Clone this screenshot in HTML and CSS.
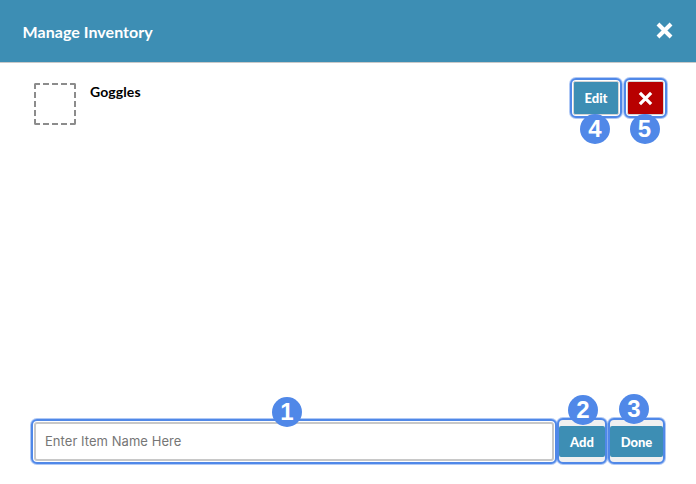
FILE: index.html
```html
<!DOCTYPE html>
<html lang="en">
<head>
<meta charset="utf-8">
<title>Manage Inventory</title>
<link rel="stylesheet" href="styles.css">
</head>
<body>
<div class="modal">
  <header class="head">
    <h1 class="title">Manage Inventory</h1>
    <svg class="close" viewBox="0 0 16 16" aria-label="Close"><path d="M2.5 2.5 13.5 13.5M13.5 2.5 2.5 13.5"/></svg>
  </header>
  <main class="list">
    <div class="row">
      <div class="thumb"></div>
      <div class="name">Goggles</div>
      <div class="actions">
        <div class="mark mark-edit">
          <button class="btn btn-edit">Edit</button>
          <span class="badge">4</span>
        </div>
        <div class="mark mark-del">
          <button class="btn-del" aria-label="Delete"><svg viewBox="0 0 12 12"><path d="M1.5 1.5 10.5 10.5M10.5 1.5 1.5 10.5"/></svg></button>
          <span class="badge">5</span>
        </div>
      </div>
    </div>
  </main>
  <footer class="foot">
    <div class="mark mark-input">
      <input class="field" type="text" placeholder="Enter Item Name Here">
      <span class="badge badge-1">1</span>
    </div>
    <div class="mark mark-add">
      <button class="btn btn-tall">Add</button>
      <span class="badge badge-2">2</span>
    </div>
    <div class="mark mark-done">
      <button class="btn btn-tall">Done</button>
      <span class="badge badge-3">3</span>
    </div>
  </footer>
</div>
</body>
</html>
```
FILE: styles.css
```css
* { box-sizing: border-box; }
html, body { margin: 0; height: 100%; background: #fff; }
body { font-family: Lato, "Liberation Sans", sans-serif; overflow: hidden; }
.modal { width: 696px; height: 484px; display: flex; flex-direction: column; }
.head {
  height: 63px; flex: none; background: #3d8eb4; border-bottom: 1px solid #c9c9c9;
  display: flex; align-items: center; justify-content: space-between; padding: 0 22px 0 22.5px;
}
.title { margin: 0; font-size: 16px; font-weight: 700; letter-spacing: .05px; color: #fff; }
.close { width: 19px; height: 19px; margin-top: -1px; fill: none; stroke: #fff; stroke-width: 3.4; }
.list { flex: 1; padding: 15px 29px 0 34px; }
.row { display: flex; align-items: flex-start; }
.thumb { width: 42px; height: 42px; margin-top: 5px; border: 2px dashed #8c8c8c; border-radius: 2px; }
.name { margin: 5px 0 0 14px; font-size: 14px; font-weight: 700; letter-spacing: .1px; color: #000; flex: 1; line-height: 17px; }
.actions { display: flex; gap: 2px; }
.mark {
  position: relative; border: 2px solid #5088e8; border-radius: 6px; background: #fff;
  box-shadow: 0 0 0 1px rgba(80, 136, 232, .45);
}
.mark-edit { width: 52px; height: 40px; padding: 1px; }
.mark-del { width: 43px; height: 40px; padding: 1px; }
.btn {
  width: 100%; height: 100%; border: 1px solid #d5d5d5; border-radius: 2px; padding: 0;
  background: #3d8eb4; color: #fff; font: 900 13px Lato, "Liberation Sans", sans-serif;
}
.btn-del {
  width: 100%; height: 100%; border: 1px solid #d5d5d5; border-radius: 2px; padding: 0;
  background: #b80000; display: flex; align-items: center; justify-content: center;
}
.btn-del svg { width: 15px; height: 15px; fill: none; stroke: #fff; stroke-width: 2.6; }
.badge {
  position: absolute; left: 50%; top: 100%; width: 30px; height: 30px; margin: -2px 0 0 -16px;
  border-radius: 50%; background: #5088e8; color: #fff;
  font: 700 24px/30px "Liberation Sans", sans-serif; text-align: center;
}
.foot { flex: none; display: flex; padding: 0 31px 20px 31px; align-items: flex-end; }
.mark-input { width: 526px; height: 45px; padding: 1px; }
.mark-add { width: 50px; height: 46px; padding: 6px 0 5px; background: #f0f0f0; }
.mark-done { width: 57px; height: 46px; padding: 6px 0 5px; margin-left: 1px; background: #f0f0f0; }
.field {
  display: block; width: 100%; height: 100%; border: 2px solid #c8c8c8; border-radius: 3px;
  padding: 0 9px 2px; font: 400 13px Inter, "Liberation Sans", sans-serif; letter-spacing: .05px; background: #fff; outline: none;
}
.field::placeholder { color: #767676; opacity: 1; }
.btn-tall { border: 0; border-radius: 2px; }
.badge-1 { top: -24px; margin: 0 0 0 -15px; left: 254px; }
.badge-2 { top: -25px; margin: 0 0 0 -15px; left: 24px; }
.badge-3 { top: -26px; margin: 0 0 0 -15px; left: 24px; }
```
